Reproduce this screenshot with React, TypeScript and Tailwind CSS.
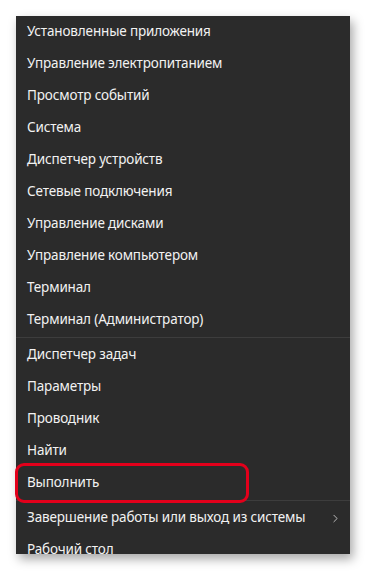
import { ChevronRight } from 'lucide-react';

const topItems = [
  'Установленные приложения',
  'Управление электропитанием',
  'Просмотр событий',
  'Система',
  'Диспетчер устройств',
  'Сетевые подключения',
  'Управление дисками',
  'Управление компьютером',
  'Терминал',
  'Терминал (Администратор)',
];

const midItems = ['Диспетчер задач', 'Параметры', 'Проводник', 'Найти', 'Выполнить'];

function Row({ label, arrow }: { label: string; arrow?: boolean }) {
  return (
    <div className="h-8 flex items-center justify-between pl-[11px] pr-[8px]">
      <span className="text-[13.5px] tracking-[-0.15px] text-[#f2f2f2] leading-none">{label}</span>
      {arrow && <ChevronRight size={13} strokeWidth={1.6} className="text-[#cfcfcf]" />}
    </div>
  );
}

function Separator() {
  return <div className="h-px bg-[#3d3d3d] my-px" />;
}

export default function App() {
  return (
    <div
      className="relative w-[366px] h-[571px] bg-white pt-4 pl-4"
      style={{ fontFamily: '"Noto Sans", "Open Sans", sans-serif' }}
    >
      <div className="w-[334px] h-[538px] bg-[#2b2b2b] overflow-hidden shadow-[3px_5px_10px_rgba(0,0,0,0.35)]">
        {topItems.map((t) => (
          <Row key={t} label={t} />
        ))}
        <Separator />
        {midItems.map((t) => (
          <Row key={t} label={t} />
        ))}
        <Separator />
        <Row label="Завершение работы или выход из системы" arrow />
        <Row label="Рабочий стол" />
      </div>

      {/* красная рамка вокруг «Выполнить» */}
      <div className="absolute left-[15px] top-[463px] w-[234px] h-[40px] rounded-[9px] border-[3px] border-[#e3001b]" />
    </div>
  );
}
